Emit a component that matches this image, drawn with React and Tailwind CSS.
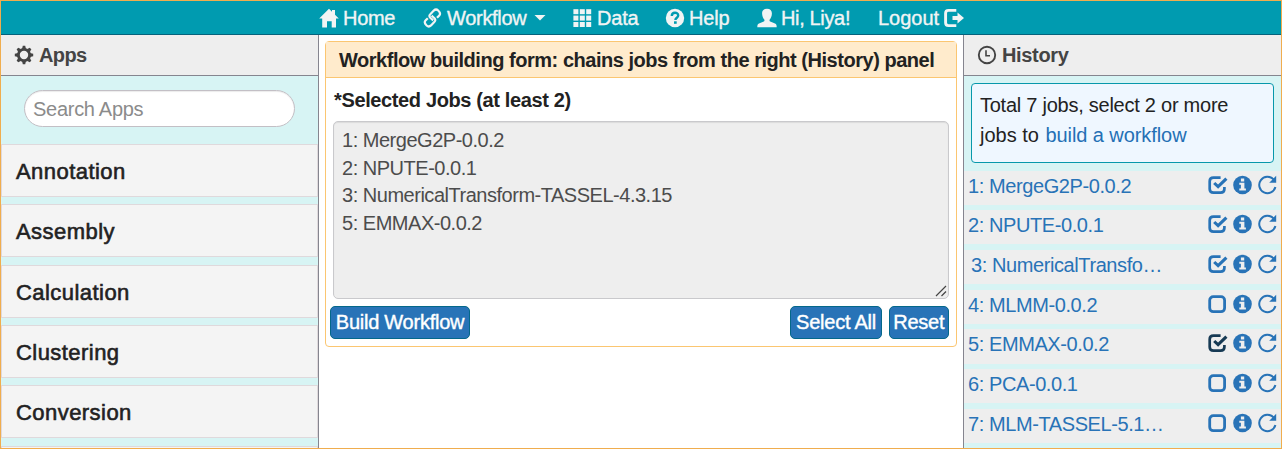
import React from "react";

function Icon({ children, className = "" }) {
  return (
    <svg viewBox="0 0 20 20" className={"h-5 w-5 shrink-0 " + className} fill="currentColor">
      {children}
    </svg>
  );
}

const HomeIcon = () => (
  <Icon>
    <path d="M10 0.8 13 3.7V1.9h3v4.8L19.8 10.5H17v9h-4.3v-6.2H8v6.2H3.2v-9H0.2Z" />
  </Icon>
);
const LinkIcon = () => (
  <Icon>
    <g fill="none" stroke="currentColor" strokeWidth="2.2" strokeLinejoin="round">
      <path d="M10.2 12.4 7.3 9.8C6.2 8.7 6.2 7.4 7.3 6.3L10.8 2.6C12.1 1.3 13.8 1.2 15.2 2.5C17.2 4.4 17.6 6 16.3 7.4L14 9.8" />
      <path d="M8.6 7.6 11.5 10.2C12.6 11.3 12.6 12.6 11.5 13.7L8 17.4C6.7 18.7 5 18.8 3.6 17.5C1.6 15.6 1.2 14 2.5 12.6L4.8 10.2" />
    </g>
  </Icon>
);
const GridIcon = () => (
  <Icon>
    {[1.2, 7.6, 14].map((y) =>
      [0.4, 6.8, 13.2].map((x) => <rect key={x + "-" + y} x={x} y={y} width="5" height="5" />)
    )}
  </Icon>
);
const HelpIcon = () => (
  <Icon>
    <circle cx="10" cy="10" r="9.2" />
    <path d="M6.8 8C6.8 3.7 13.2 3.7 13.2 7.6C13.2 9.7 10.4 9.7 10.4 12" fill="none" stroke="#009bb0" strokeWidth="2.4" />
    <rect x="9" y="13.3" width="2.7" height="2.5" fill="#009bb0" />
  </Icon>
);
const UserIcon = () => (
  <Icon>
    <path d="M10 0.7C13.2 0.7 15 2.6 14.9 5.5C14.8 8.3 13.9 10.3 12.7 11.5C12.3 12.8 12.6 13.3 13.8 13.8L18 15.6C19.3 16.2 19.7 17.2 19.7 19.3H0.3C0.3 17.2 0.7 16.2 2 15.6L6.2 13.8C7.4 13.3 7.7 12.8 7.3 11.5C6.1 10.3 5.2 8.3 5.1 5.5C5 2.6 6.8 0.7 10 0.7Z" />
  </Icon>
);
const LogoutIcon = () => (
  <Icon>
    <path d="M12.3 2.4H4.5C2.5 2.4 1.6 3.3 1.6 5.2V14.8C1.6 16.7 2.5 17.6 4.5 17.6H12.3" fill="none" stroke="currentColor" strokeWidth="2.9" />
    <path d="M13.5 4.4 20 10 13.5 15.6V12H8.5V8H13.5Z" />
  </Icon>
);
const GearIcon = () => (
  <Icon>
    <circle cx="10" cy="10" r="5.6" fill="none" stroke="currentColor" strokeWidth="2.8" />
    {[0, 45, 90, 135, 180, 225, 270, 315].map((a) => (
      <path key={a} d="M8 4 8.8 0.8H11.2L12 4Z" transform={"rotate(" + a + " 10 10)"} />
    ))}
  </Icon>
);
const ClockIcon = () => (
  <Icon>
    <circle cx="10" cy="10" r="8.2" fill="none" stroke="currentColor" strokeWidth="1.9" />
    <path d="M9 5.2V10.7H13" fill="none" stroke="currentColor" strokeWidth="1.6" />
  </Icon>
);
const CheckIcon = ({ checked }) => (
  <Icon>
    {checked ? (
      <g fill="none" stroke="currentColor">
        <path d="M12.6 2.7H5.5C2.7 2.7 1.7 3.8 1.7 6.3V14C1.7 16.6 2.8 17.6 5.5 17.6H12.6C15.3 17.6 16.4 16.6 16.4 14V12" strokeWidth="2.7" />
        <path d="M6.2 8 10.1 11.7 18.4 3.6" strokeWidth="3.1" />
      </g>
    ) : (
      <rect x="1.7" y="2.7" width="14.9" height="15" rx="3.6" fill="none" stroke="currentColor" strokeWidth="2.8" />
    )}
  </Icon>
);
const InfoIcon = () => (
  <Icon>
    <circle cx="9.5" cy="10" r="9.3" />
    <path d="M7.9 3.6H11.2V6.5H7.9ZM6.3 7.8H11.4V13.6H12.9V15.6H6.3V13.6H7.9V9.8H6.3Z" fill="#eeeeee" />
  </Icon>
);
const RefreshIcon = () => (
  <Icon>
    <path d="M15.5 4.4A8.2 8.2 0 1 0 17.4 12" fill="none" stroke="currentColor" strokeWidth="2" />
    <path d="M18.2 0.8V7.8H11.2Z" />
  </Icon>
);

const nav = [
  { label: "Home", icon: <HomeIcon />, width: "w-[104px]", text: "tracking-[-0.3px]" },
  { label: "Workflow", icon: <LinkIcon />, width: "w-[150px]", text: "tracking-[-0.3px]", caret: true },
  { label: "Data", icon: <GridIcon />, width: "w-[92px]", text: "tracking-[-0.2px]" },
  { label: "Help", icon: <HelpIcon />, width: "w-[92px]", text: "tracking-[-0.2px]" },
  { label: "Hi, Liya!", icon: <UserIcon />, width: "w-[121px]", text: "tracking-[-0.35px]" },
];

const categories = ["Annotation", "Assembly", "Calculation", "Clustering", "Conversion", ""];

const jobs = [
  { name: "1: MergeG2P-0.0.2", checked: true },
  { name: "2: NPUTE-0.0.1", checked: true },
  { name: "3: NumericalTransfo…", checked: true, indent: true },
  { name: "4: MLMM-0.0.2" },
  { name: "5: EMMAX-0.0.2", checked: true, active: true },
  { name: "6: PCA-0.0.1" },
  { name: "7: MLM-TASSEL-5.1…" },
];

const selected = "1: MergeG2P-0.0.2\n2: NPUTE-0.0.1\n3: NumericalTransform-TASSEL-4.3.15\n5: EMMAX-0.0.2";

const buttonClass =
  "h-[33px] rounded-[5px] border border-[#04688a] bg-[#2873b7] pb-px text-center leading-[30px] text-white whitespace-nowrap tracking-[-0.25px] [-webkit-text-stroke:0.4px_white]";

export default function App() {
  return (
    <div className="flex h-[449px] w-[1282px] flex-col overflow-hidden border border-[#f0ad4e] bg-white font-['Liberation_Sans',Arial,sans-serif] text-[20px] text-[#222]">
      <nav className="flex h-[34px] shrink-0 items-center border-b border-[#05627c] bg-[#009bb0] pl-[318px] text-[#f1f4f4] [-webkit-text-stroke:0.35px_#f1f4f4]">
        {nav.map((item) => (
          <a key={item.label} className={"flex shrink-0 items-center gap-1 whitespace-nowrap " + item.width}>
            {item.icon}
            <span className={item.text}>{item.label}</span>
            {item.caret && (
              <svg viewBox="0 0 12 6" className="ml-1 h-[6px] w-3" fill="currentColor">
                <path d="M0.5 0H11.5L6 5.6Z" />
              </svg>
            )}
          </a>
        ))}
        <a className="flex items-center gap-[5px] whitespace-nowrap">
          <span>Logout</span>
          <LogoutIcon />
        </a>
      </nav>

      <div className="flex min-h-0 flex-1">
        <aside className="flex w-[318px] shrink-0 flex-col overflow-hidden border-r border-[#85858f] bg-[#d7f4f4]">
          <h2 className="flex h-[41px] shrink-0 items-center gap-[5px] border-b border-[#85858f] bg-[#eeeeee] pl-[13px] font-bold text-[#444]">
            <GearIcon />
            <span className="tracking-[-0.6px]">Apps</span>
          </h2>
          <div className="flex h-[68px] shrink-0 pt-[14px] pl-[23px]">
            <input
              placeholder="Search Apps"
              className="h-[37px] w-[271px] rounded-full border border-[#c3bfc5] bg-white px-2 pt-[2px] tracking-[-0.28px] shadow-[inset_0_1px_1px_rgba(0,0,0,0.08)] outline-none placeholder:text-[#8b8b8b]"
            />
          </div>
          <ul className="flex shrink-0 flex-col gap-[7.33px]">
            {categories.map((name) => (
              <li
                key={name}
                className="flex h-[53px] shrink-0 items-center border border-[#dfd9dc] bg-[#f4f4f4] pl-[14px] pt-[2px] text-[22px] tracking-[0.45px] [-webkit-text-stroke:0.6px_#222]"
              >
                {name}
              </li>
            ))}
          </ul>
        </aside>

        <main className="min-w-0 flex-1 px-[6px] pt-[6px]">
          <section className="h-[306px] rounded-[4px] border border-[#fbc671]">
            <h1 className="h-[36px] border-b border-[#fbc671] bg-[#ffebcc] pl-[13px] text-[20px] leading-[37px] font-bold tracking-[-0.47px] whitespace-nowrap">
              Workflow building form: chains jobs from the right (History) panel
            </h1>
            <label className="block pt-[8px] pl-[8px] leading-[28px] font-bold tracking-[-0.37px]">*Selected Jobs (at least 2)</label>
            <div className="relative mt-[7px] ml-[7px] h-[178px] w-[616px]">
              <textarea
                readOnly
                value={selected}
                className="block h-full w-full resize-none rounded-[5px] border border-[#c9c9cc] bg-[#eeeeee] px-2 py-[5px] leading-[27.5px] tracking-[-0.48px] text-[#4c4c4c] shadow-[inset_0_1px_1px_rgba(0,0,0,0.08)] outline-none"
              />
              <svg viewBox="0 0 12 12" className="absolute right-[2px] bottom-[2px] h-3 w-3" fill="none" stroke="#444" strokeWidth="1.2">
                <path d="M1 11 11 1M6.5 11 11 6.5" />
              </svg>
            </div>
            <div className="mt-[6.5px] flex gap-[6.5px] pr-[7px] pl-[4px]">
              <button className={buttonClass + " mr-auto w-[140px]"}>Build Workflow</button>
              <button className={buttonClass + " w-[92px]"}>Select All</button>
              <button className={buttonClass + " w-[60.5px]"}>Reset</button>
            </div>
          </section>
        </main>

        <aside className="flex w-[318px] shrink-0 flex-col overflow-hidden border-l border-[#85858f] bg-[#d7f4f4]">
          <h2 className="flex h-[41px] shrink-0 items-center gap-[5px] border-b border-[#85858f] bg-[#eeeeee] pl-[13px] font-bold text-[#444]">
            <ClockIcon />
            <span className="tracking-[-0.35px]">History</span>
          </h2>
          <div className="mx-[7px] mt-[7px] h-[80px] shrink-0 rounded-[4px] border border-[#0798ab] bg-[#eff7ff] pt-[6px] pl-[8px] leading-[30px] whitespace-nowrap">
            <span className="tracking-[-0.25px]">Total 7 jobs, select 2 or more</span>
            <br />
            jobs to <a className="pl-px tracking-[-0.08px] text-[#2470b5]">build a workflow</a>
          </div>
          <ul className="mt-[7.5px] flex shrink-0 flex-col gap-[5.4px] text-[#2873b7]">
            {jobs.map((job) => (
              <li key={job.name} className="flex h-[34.3px] items-start bg-[#eeeeee] pr-[3px]">
                <a className={"mr-auto whitespace-nowrap leading-[31px] tracking-[-0.41px] " + (job.indent ? "pl-[7px]" : "pl-1")}>{job.name}</a>
                <span className="flex gap-[5px] pt-[4px]">
                  <span className={job.active ? "text-[#173a54]" : ""}>
                    <CheckIcon checked={job.checked} />
                  </span>
                  <InfoIcon />
                  <RefreshIcon />
                </span>
              </li>
            ))}
          </ul>
        </aside>
      </div>
    </div>
  );
}
